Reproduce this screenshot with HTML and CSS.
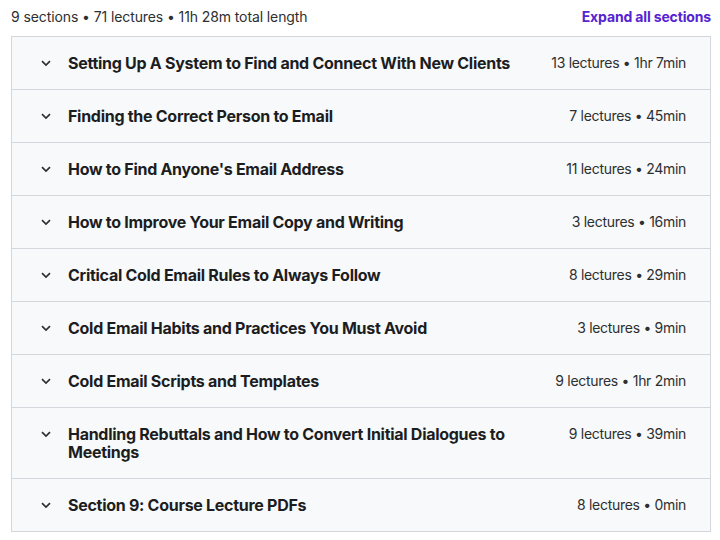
FILE: index.html
```html
<!DOCTYPE html>
<html lang="en">

<head>
  <meta charset="UTF-8">
  <meta name="viewport" content="width=device-width, initial-scale=1.0">
  <title>Course content</title>
  <link rel="stylesheet" href="styles.css">
</head>

<body>
  <div class="curriculum">
    <div class="curriculum-header">
      <span class="summary">9 sections • 71 lectures • 11h 28m total length</span>
      <button class="btn-expand">Expand all sections</button>
    </div>

    <div class="section-list">
      <div class="section-row">
        <svg class="chevron" viewBox="0 0 12 12"><path d="M2 4.2 L6 8 L10 4.2"/></svg>
        <span class="section-title">Setting Up A System to Find and Connect With New Clients</span>
        <span class="section-meta">13 lectures • 1hr 7min</span>
      </div>
      <div class="section-row">
        <svg class="chevron" viewBox="0 0 12 12"><path d="M2 4.2 L6 8 L10 4.2"/></svg>
        <span class="section-title">Finding the Correct Person to Email</span>
        <span class="section-meta">7 lectures • 45min</span>
      </div>
      <div class="section-row">
        <svg class="chevron" viewBox="0 0 12 12"><path d="M2 4.2 L6 8 L10 4.2"/></svg>
        <span class="section-title">How to Find Anyone's Email Address</span>
        <span class="section-meta">11 lectures • 24min</span>
      </div>
      <div class="section-row">
        <svg class="chevron" viewBox="0 0 12 12"><path d="M2 4.2 L6 8 L10 4.2"/></svg>
        <span class="section-title">How to Improve Your Email Copy and Writing</span>
        <span class="section-meta">3 lectures • 16min</span>
      </div>
      <div class="section-row">
        <svg class="chevron" viewBox="0 0 12 12"><path d="M2 4.2 L6 8 L10 4.2"/></svg>
        <span class="section-title">Critical Cold Email Rules to Always Follow</span>
        <span class="section-meta">8 lectures • 29min</span>
      </div>
      <div class="section-row">
        <svg class="chevron" viewBox="0 0 12 12"><path d="M2 4.2 L6 8 L10 4.2"/></svg>
        <span class="section-title">Cold Email Habits and Practices You Must Avoid</span>
        <span class="section-meta">3 lectures • 9min</span>
      </div>
      <div class="section-row">
        <svg class="chevron" viewBox="0 0 12 12"><path d="M2 4.2 L6 8 L10 4.2"/></svg>
        <span class="section-title">Cold Email Scripts and Templates</span>
        <span class="section-meta">9 lectures • 1hr 2min</span>
      </div>
      <div class="section-row">
        <svg class="chevron" viewBox="0 0 12 12"><path d="M2 4.2 L6 8 L10 4.2"/></svg>
        <span class="section-title">Handling Rebuttals and How to Convert Initial Dialogues to Meetings</span>
        <span class="section-meta">9 lectures • 39min</span>
      </div>
      <div class="section-row">
        <svg class="chevron" viewBox="0 0 12 12"><path d="M2 4.2 L6 8 L10 4.2"/></svg>
        <span class="section-title">Section 9: Course Lecture PDFs</span>
        <span class="section-meta">8 lectures • 0min</span>
      </div>
    </div>
  </div>
</body>

</html>
```

FILE: styles.css
```css
body {
  margin: 0;
  background: #fff;
  color: #2d2f31;
  font-family: Inter, "Liberation Sans", sans-serif;
}

.curriculum {
  width: 700px;
  margin-left: 11px;
}

.curriculum-header {
  display: flex;
  justify-content: space-between;
  align-items: center;
  height: 32px;
  margin-bottom: 4px;
}

.summary {
  font-size: 14px;
  letter-spacing: -0.1px;
}

.btn-expand {
  padding: 0;
  border: none;
  background: none;
  color: #5624d0;
  font-family: inherit;
  font-size: 14px;
  font-weight: 700;
  letter-spacing: -0.15px;
  cursor: pointer;
}

.section-list {
  border: 1px solid #d1d7dc;
  border-bottom: none;
}

.section-row {
  display: flex;
  align-items: flex-start;
  padding: 17px 24px 17px 28px;
  background: #f7f9fa;
  border-bottom: 1px solid #d1d7dc;
}

.chevron {
  flex: none;
  width: 12px;
  height: 12px;
  margin-top: 3px;
  margin-right: 16px;
  fill: none;
  stroke: #2d2f31;
  stroke-width: 1.7;
}

.section-title {
  flex: 1;
  color: #1c1d1f;
  font-size: 16px;
  font-weight: 700;
  line-height: 18px;
  letter-spacing: -0.28px;
  margin-right: 16px;
}

.section-meta {
  flex: none;
  font-size: 14px;
  line-height: 18px;
  letter-spacing: -0.3px;
}
```
